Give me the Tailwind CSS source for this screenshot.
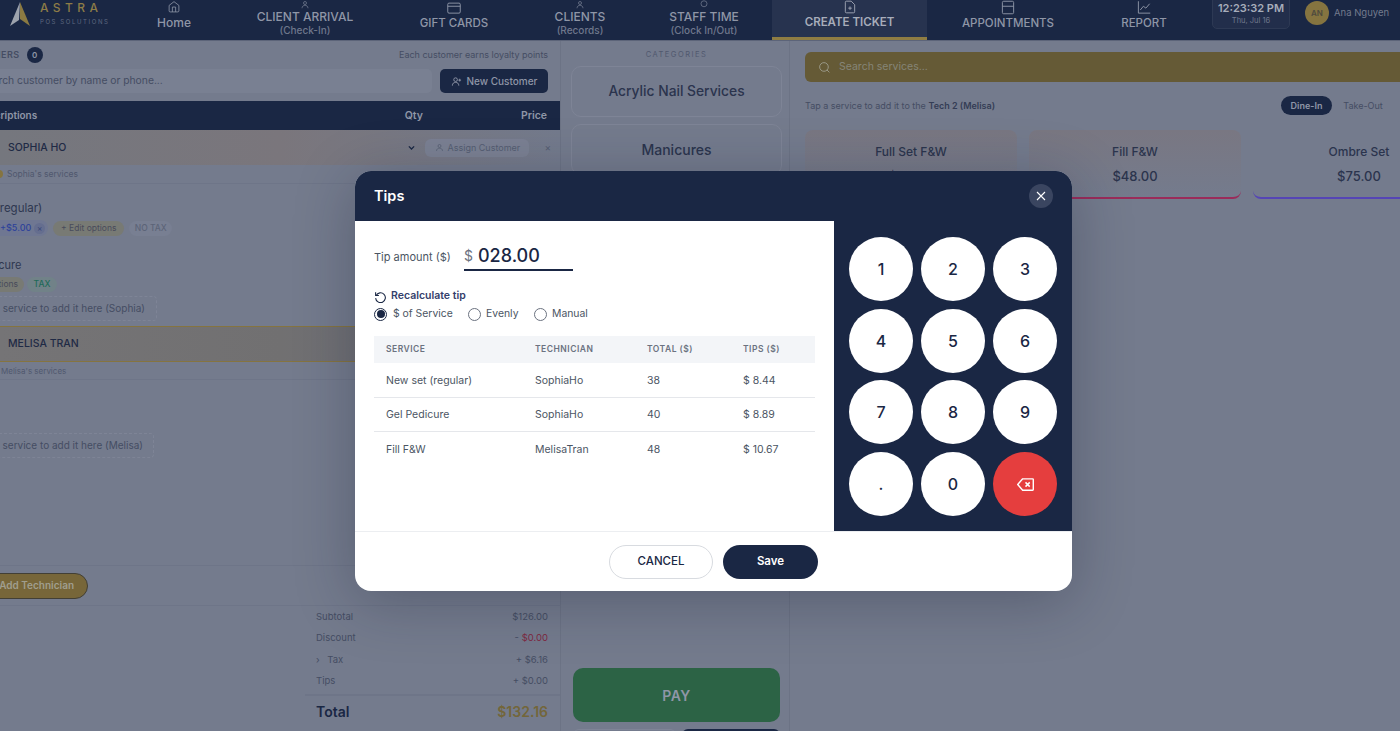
<!DOCTYPE html>
<html lang="en">
<head>
    <meta charset="UTF-8">
    <meta name="viewport" content="width=device-width, initial-scale=1.0">
    <title>Astra POS - Tips</title>
    <script src="https://cdn.jsdelivr.net/npm/@tailwindcss/browser@4"></script>
</head>
<body class="bg-[#747b8d] font-['Inter',sans-serif] text-[#1a2744] overflow-hidden">
<div class="relative w-[1400px] h-[731px] overflow-hidden flex flex-col">

    <!-- Top nav -->
    <header class="h-[41px] shrink-0 bg-[#1a2744] flex items-end overflow-hidden text-[#8f96a7] border-b border-[#5c6479]">
        <div class="w-[122px] h-[40px] shrink-0 flex items-start pl-[10px]">
            <svg width="20" height="26" viewBox="0 0 20 26" class="shrink-0 mt-[2px]">
                <polygon points="10,0 0,24 9,18" fill="#9da3ad"/>
                <polygon points="10,0 20,24 10,17" fill="#8b7a42"/>
            </svg>
            <div class="ml-[10px] mt-[1px]">
                <div class="text-[12px] leading-[14px] tracking-[4.4px] font-medium text-[#8d7c47]">ASTRA</div>
                <div class="text-[6px] leading-[9px] mt-[2px] tracking-[1.6px] text-[#5f6880]">POS SOLUTIONS</div>
            </div>
        </div>
        <nav class="flex items-end h-full">
            <div class="w-[104px] h-[40px] flex flex-col items-center justify-end pb-[10px] shrink-0">
                <svg width="18" height="18" viewBox="0 0 24 24" fill="none" stroke="#8f96a7" stroke-width="1.5"><path d="M3 10l9-7 9 7v10a2 2 0 0 1-2 2H5a2 2 0 0 1-2-2z"/><path d="M9 22v-9h6v9"/></svg>
                <span class="text-[12px] leading-[15px] mt-[2px] font-medium">Home</span>
            </div>
            <div class="w-[158px] h-[40px] flex flex-col items-center justify-end pb-[3px] shrink-0">
                <svg width="18" height="18" viewBox="0 0 24 24" fill="none" stroke="#8f96a7" stroke-width="1.5"><circle cx="12" cy="8" r="4"/><path d="M4 22c0-5 4-8 8-8s8 3 8 8"/></svg>
                <span class="text-[12px] leading-[15px] font-medium">CLIENT ARRIVAL</span>
                <span class="text-[10px] leading-[13px] text-[#6f778c] font-medium">(Check-In)</span>
            </div>
            <div class="w-[140px] h-[40px] flex flex-col items-center justify-end pb-[9px] shrink-0">
                <svg width="18" height="18" viewBox="0 0 24 24" fill="none" stroke="#8f96a7" stroke-width="1.5"><rect x="2" y="5" width="20" height="16" rx="2"/><path d="M2 10h20"/></svg>
                <span class="text-[11.5px] leading-[15px] mt-[1px] font-medium">GIFT CARDS</span>
            </div>
            <div class="w-[112px] h-[40px] flex flex-col items-center justify-end pb-[3px] shrink-0">
                <svg width="18" height="18" viewBox="0 0 24 24" fill="none" stroke="#8f96a7" stroke-width="1.5"><circle cx="12" cy="8" r="4"/><path d="M4 22c0-5 4-8 8-8s8 3 8 8"/></svg>
                <span class="text-[12px] leading-[15px] font-medium">CLIENTS</span>
                <span class="text-[10px] leading-[13px] text-[#6f778c] font-medium">(Records)</span>
            </div>
            <div class="w-[136px] h-[40px] flex flex-col items-center justify-end pb-[3px] shrink-0">
                <svg width="18" height="18" viewBox="0 0 24 24" fill="none" stroke="#8f96a7" stroke-width="1.5"><circle cx="12" cy="10" r="8"/></svg>
                <span class="text-[12px] leading-[15px] font-medium">STAFF TIME</span>
                <span class="text-[10px] leading-[13px] text-[#6f778c] font-medium">(Clock In/Out)</span>
            </div>
            <div class="w-[155px] h-[40px] flex flex-col items-center justify-end pb-[7px] shrink-0 bg-[#27334f] border-b-[3px] border-[#8f7d43] text-[#a7adba]">
                <svg width="18" height="18" viewBox="0 0 24 24" fill="none" stroke="#a7adba" stroke-width="1.5"><path d="M14 2H6a2 2 0 0 0-2 2v16a2 2 0 0 0 2 2h12a2 2 0 0 0 2-2V8z"/><path d="M12 11v6M9 14h6"/></svg>
                <span class="text-[11.5px] leading-[15px] mt-[1px] font-semibold">CREATE TICKET</span>
            </div>
            <div class="w-[162px] h-[40px] flex flex-col items-center justify-end pb-[9px] shrink-0">
                <svg width="18" height="18" viewBox="0 0 24 24" fill="none" stroke="#8f96a7" stroke-width="1.5"><rect x="3" y="2" width="18" height="20" rx="2"/><path d="M3 10h18"/></svg>
                <span class="text-[11.5px] leading-[15px] mt-[1px] font-medium">APPOINTMENTS</span>
            </div>
            <div class="w-[110px] h-[40px] flex flex-col items-center justify-end pb-[9px] shrink-0">
                <svg width="18" height="18" viewBox="0 0 24 24" fill="none" stroke="#8f96a7" stroke-width="1.5"><path d="M3 2v19h19"/><path d="M6 16l5-6 4 3 6-7"/></svg>
                <span class="text-[11.5px] leading-[15px] mt-[1px] font-medium">REPORT</span>
            </div>
        </nav>
        <div class="ml-[13px] mb-[11px] w-[78px] h-[34px] shrink-0 bg-[#222e4b] border border-[#2d3954] rounded-[5px] flex flex-col items-center justify-end pb-[2px]">
            <span class="text-[11px] leading-[14px] font-semibold text-[#a7adba]">12:23:32 PM</span>
            <span class="text-[7.5px] leading-[11px] text-[#6f778c]">Thu, Jul 16</span>
        </div>
        <div class="ml-[15px] mb-[15px] w-[24px] h-[24px] shrink-0 rounded-full bg-[#857440] text-[8px] font-semibold text-[#4d4a3e] flex items-center justify-center">AN</div>
        <span class="ml-[5px] mb-[21px] text-[9.5px] leading-[12px] text-[#747b8d] whitespace-nowrap">Ana Nguyen</span>
    </header>

    <div class="flex flex-1 min-h-0">
        <!-- Ticket column -->
        <section class="w-[561px] shrink-0 overflow-hidden border-r border-[#6c7385] flex flex-col">
            <div class="h-[60px] shrink-0 pr-[12px] pt-[5px]">
                <div class="flex items-center justify-between h-[18px]">
                    <div class="flex items-center -ml-[42px]">
                        <span class="text-[9px] font-semibold tracking-[0.5px] text-[#454d63]">CUSTOMERS</span>
                        <span class="ml-[7px] w-[16px] h-[16px] rounded-full bg-[#1a2744] text-[#8f96a7] text-[8px] font-semibold flex items-center justify-center">0</span>
                    </div>
                    <span class="text-[9px] text-[#454d63]">Each customer earns loyalty points</span>
                </div>
                <div class="flex items-center gap-[8px] mt-[5px]">
                    <div class="flex-1 h-[24px] bg-[#798092] rounded-[5px] -ml-[20px] flex items-center text-[10.3px] text-[#454d63] overflow-hidden whitespace-nowrap">Search customer by name or phone...</div>
                    <div class="w-[108px] h-[24px] rounded-[5px] bg-[#1a2744] text-[#8f96a7] flex items-center justify-center gap-[5px] text-[10px] font-medium">
                        <svg width="11" height="11" viewBox="0 0 24 24" fill="none" stroke="#8f96a7" stroke-width="2"><circle cx="10" cy="8" r="4"/><path d="M3 21c0-5 3-7 7-7s7 2 7 7"/><path d="M19 6v6M16 9h6"/></svg>
                        New Customer
                    </div>
                </div>
            </div>
            <div class="h-[29px] shrink-0 bg-[#1a2744] text-[#8f96a7] text-[10px] font-semibold flex items-center pr-[13px]">
                <span class="-ml-[24px]">Descriptions</span>
                <span class="ml-auto mr-[98px] text-[10.5px]">Qty</span>
                <span class="text-[10.5px]">Price</span>
            </div>
            <div class="h-[35px] shrink-0 flex items-center pl-[8px] bg-gradient-to-r from-[#75777e] via-[#7a767c] to-[#747b8d]">
                <span class="text-[10.5px] font-medium text-[#1f2a45]">SOPHIA HO</span>
                <svg width="9" height="9" viewBox="0 0 24 24" fill="none" stroke="#1a2744" stroke-width="3.5" class="ml-auto"><path d="M5 9l7 7 7-7"/></svg>
                <div class="ml-[9px] w-[104px] h-[18px] rounded-[6px] bg-[#7b8193] text-[#555d72] text-[9px] flex items-center justify-center gap-[4px]">
                    <svg width="9" height="9" viewBox="0 0 24 24" fill="none" stroke="#555d72" stroke-width="2"><circle cx="12" cy="8" r="4"/><path d="M4 21c0-5 4-7 8-7s8 2 8 7"/></svg>
                    Assign Customer
                </div>
                <span class="ml-[15px] mr-[9px] text-[#555d72] text-[10px]">×</span>
            </div>
            <div class="h-[19px] shrink-0 flex items-center border-b border-[#6e7588] text-[8.5px] text-[#50586e]">
                <span class="w-[8px] h-[8px] rounded-full bg-[#857440] -ml-[5px] mr-[4px]"></span>Sophia's services
            </div>
            <div class="h-[142px] shrink-0 relative">
                <div class="mt-[17px] -ml-[52px] text-[11.5px] leading-[15px] text-[#2e3750] whitespace-nowrap">New set (regular)</div>
                <div class="mt-[3px] flex items-center h-[18px] text-[8.5px]">
                    <span class="h-[16px] flex items-center rounded-r-full bg-[#6f7792] pr-[3px] text-[#2d429a] font-medium text-[9px]">+$5.00<span class="ml-[3px] w-[11px] h-[11px] rounded-full bg-[#656e8f] text-[#3d4a7a] text-[8px] flex items-center justify-center">×</span></span>
                    <span class="ml-[5px] h-[15px] w-[71px] justify-center rounded-full bg-[#787a74] text-[#484b5b] flex items-center">+ Edit options</span>
                    <span class="ml-[5px] h-[15px] w-[43px] justify-center rounded-full bg-[#787f92] text-[#5c6478] font-medium flex items-center">NO TAX</span>
                </div>
                <div class="mt-[21px] -ml-[45px] text-[11px] leading-[14px] text-[#2e3750] whitespace-nowrap">Gel Pedicure</div>
                <div class="mt-[5px] flex items-center h-[15px] text-[8.5px]">
                    <span class="-ml-[49px] w-[73px] h-[15px] pr-[6px] rounded-full bg-[#787a74] text-[#484b5b] flex items-center justify-end whitespace-nowrap">+ Edit options</span>
                    <span class="ml-[3px] h-[15px] w-[30px] justify-center rounded-full bg-[#718288] text-[#1f6a58] font-medium flex items-center">TAX</span>
                </div>
                <div class="mt-[4px] -ml-[40px] w-[197px] h-[25px] border border-dashed border-[#7e8496] rounded-[4px] flex items-center justify-end pr-[11px] text-[10px] text-[#454d63] whitespace-nowrap">Tap a service to add it here (Sophia)</div>
            </div>
            <div class="h-[36px] shrink-0 flex items-center pl-[8px] border-y-[1.5px] border-[#857440] bg-gradient-to-r from-[#757476] via-[#717071] to-[#6c7082]">
                <span class="text-[10.5px] font-medium text-[#1f2a45]">MELISA TRAN</span>
            </div>
            <div class="h-[18px] shrink-0 flex items-center border-b border-[#6e7588] text-[8px] text-[#50586e] pl-[1px]">Melisa's services</div>
            <div class="h-[186px] shrink-0 border-b border-[#6e7588]">
                <div class="mt-[53px] -ml-[40px] w-[194px] h-[25px] border border-dashed border-[#7e8496] rounded-[4px] flex items-center justify-end pr-[10px] text-[10px] text-[#454d63] whitespace-nowrap">Tap a service to add it here (Melisa)</div>
            </div>
            <div class="h-[40px] shrink-0 flex items-center border-b border-[#6e7588]">
                <span class="-ml-[20px] w-[108px] h-[26px] rounded-full bg-[#776639] border border-[#423f35] flex items-center justify-end pr-[13px] text-[10px] font-semibold text-[#a09e8e] whitespace-nowrap">+ Add Technician</span>
            </div>
            <div class="ml-[305px] flex-1 pl-[11px] pr-[12px] pt-[1px] text-[9.5px] text-[#454d63]">
                <div class="h-[21px] flex items-center justify-between"><span>Subtotal</span><span>$126.00</span></div>
                <div class="h-[21px] flex items-center justify-between"><span>Discount</span><span class="text-[#7f2942]"><span class="text-[#454d63]">- </span>$0.00</span></div>
                <div class="h-[22px] flex items-center justify-between"><span><span class="mr-[5px]">›</span> Tax</span><span>+ $6.16</span></div>
                <div class="h-[21px] flex items-center justify-between"><span>Tips</span><span>+ $0.00</span></div>
                <div class="-ml-[11px] -mr-[12px] pl-[11px] pr-[12px] h-[33px] mt-[2px] border-t-2 border-[#6e7588] flex items-center justify-between">
                    <span class="text-[14px] font-semibold text-[#1a2744]">Total</span>
                    <span class="text-[14px] font-semibold text-[#73663a]">$132.16</span>
                </div>
            </div>
        </section>

        <!-- Categories column -->
        <section class="w-[229px] shrink-0 pl-[10px] pr-[7px] border-r border-[#6c7385] flex flex-col overflow-hidden">
            <div class="h-[25px] pt-[9px] shrink-0 text-center text-[7.5px] leading-[9px] tracking-[1.5px] text-[#50586e]">CATEGORIES</div>
            <div class="h-[51px] shrink-0 border border-[#7e8496] rounded-[10px] flex items-center justify-center text-[13.8px] font-medium text-[#2b344d]">Acrylic Nail Services</div>
            <div class="h-[51px] shrink-0 mt-[7px] border border-[#7e8496] rounded-[10px] flex items-center justify-center text-[14px] font-medium text-[#2b344d]">Manicures</div>
            <div class="mt-[493px] ml-[2px] w-[207px] h-[54px] shrink-0 rounded-[10px] bg-[#2c6345] flex items-center justify-center text-[14px] font-semibold tracking-[0.5px] text-[#8f96a7]">PAY</div>
            <div class="mt-[7px] ml-[2px] w-[207px] h-[30px] shrink-0 flex gap-[6px]">
                <div class="w-[103px] border border-[#7e8496] rounded-[6px]"></div>
                <div class="flex-1 bg-[#1a2744] rounded-[6px]"></div>
            </div>
        </section>

        <!-- Services column -->
        <section class="flex-1 pl-[15px] flex flex-col min-w-0 overflow-hidden">
            <div class="mt-[11px] h-[30px] w-[600px] shrink-0 rounded-l-[6px] bg-[#655a36] flex items-center pl-[13px] text-[10.5px] text-[#858577]">
                <svg width="13" height="13" viewBox="0 0 24 24" fill="none" stroke="#999887" stroke-width="1.8"><circle cx="11" cy="11" r="8"/><path d="M21 21l-4.5-4.5"/></svg>
                <span class="ml-[8px]">Search services...</span>
            </div>
            <div class="mt-[14px] h-[19px] flex items-center text-[9px] text-[#454d63] shrink-0">
                <span>Tap a service to add it to the <span class="font-semibold text-[#343d55]">Tech 2 (Melisa)</span></span>
                <span class="ml-auto w-[51px] h-[19px] rounded-full bg-[#1a2744] text-[#8f96a7] font-semibold flex items-center justify-center">Dine-In</span>
                <span class="ml-[11px] mr-[17px] w-[40px] text-center whitespace-nowrap">Take-Out</span>
            </div>
            <div class="mt-[15px] flex gap-[12px] shrink-0">
                <div class="w-[212px] h-[69px] shrink-0 text-center pt-[14px] rounded-[8px] bg-gradient-to-b from-[#797782] to-[#747b8d]">
                    <div class="text-[12px] leading-[16px] text-[#2b344d] font-medium">Full Set F&amp;W</div>
                    <div class="text-[13px] leading-[16px] mt-[8px] font-medium text-[#2b344d]">$38.00</div>
                </div>
                <div class="w-[212px] h-[69px] shrink-0 text-center pt-[14px] border-b-2 border-[#9a2c5a] rounded-[8px] bg-gradient-to-b from-[#797782] to-[#747b8d]">
                    <div class="text-[12px] leading-[16px] text-[#2b344d] font-medium">Fill F&amp;W</div>
                    <div class="text-[13px] leading-[16px] mt-[8px] font-medium text-[#2b344d]">$48.00</div>
                </div>
                <div class="w-[212px] h-[69px] shrink-0 text-center pt-[14px] border-b-2 border-[#5545b5] rounded-[8px]">
                    <div class="text-[12px] leading-[16px] text-[#2b344d] font-medium">Ombre Set</div>
                    <div class="text-[13px] leading-[16px] mt-[8px] font-medium text-[#2b344d]">$75.00</div>
                </div>
            </div>
        </section>
    </div>

    <!-- Tips modal -->
    <div class="absolute left-[355px] top-[171px] w-[717px] h-[420px] rounded-[16px] overflow-hidden bg-white shadow-[0_10px_60px_rgba(20,25,45,0.3)] flex flex-col">
        <div class="flex h-[360px] shrink-0">
            <div class="w-[479px] shrink-0 flex flex-col">
                <div class="h-[50px] shrink-0 bg-[#1a2744] flex items-center pl-[19px] text-[14.5px] font-semibold text-white">Tips</div>
                <div class="pl-[19px] pr-[19px]">
                    <div class="flex items-center h-[50px] mt-[12px]">
                        <span class="w-[90px] -mt-[2px] text-[11px] text-[#4b5563] whitespace-nowrap">Tip amount ($)</span>
                        <div class="w-[109px] h-[28px] border-b-2 border-[#1a2744] flex items-center -mt-[3px]">
                            <span class="text-[14px] text-[#6b7280]">$</span>
                            <span class="ml-[5px] text-[18px] font-medium text-[#1a2744]">028.00</span>
                        </div>
                    </div>
                    <div class="flex items-center h-[14px] mt-[6px]">
                        <svg width="13" height="13" viewBox="0 0 24 24" fill="none" stroke="#1a2744" stroke-width="2"><path d="M3 4v6h6"/><path d="M4 10a9 9 0 1 1-1 5"/></svg>
                        <span class="ml-[4px] text-[10.5px] font-semibold text-[#34406b]">Recalculate tip</span>
                    </div>
                    <div class="flex items-center h-[18px] mt-[2px] text-[10.4px] text-[#4b5563]">
                        <span class="w-[13px] h-[13px] rounded-full border border-[#1a2744] flex items-center justify-center"><span class="w-[8px] h-[8px] rounded-full bg-[#1a2744]"></span></span>
                        <span class="ml-[6px] w-[59px] whitespace-nowrap">$ of Service</span>
                        <span class="ml-[16px] w-[13px] h-[13px] rounded-full border border-[#6b7280]"></span>
                        <span class="ml-[5px] w-[32px]">Evenly</span>
                        <span class="ml-[16px] w-[13px] h-[13px] rounded-full border border-[#6b7280]"></span>
                        <span class="ml-[5px]">Manual</span>
                    </div>
                    <table class="mt-[13px] w-[441px] table-fixed text-left">
                        <thead>
                            <tr class="h-[27px] bg-[#f3f5f8] text-[8.5px] font-semibold tracking-[0.5px] text-[#6b7280]">
                                <th class="w-[161px] pl-[12px] font-semibold">SERVICE</th>
                                <th class="w-[112px] font-semibold">TECHNICIAN</th>
                                <th class="w-[96px] font-semibold">TOTAL ($)</th>
                                <th class="font-semibold">TIPS ($)</th>
                            </tr>
                        </thead>
                        <tbody class="text-[10.5px] text-[#4b5563] [&_td]:pt-[2px]">
                            <tr class="h-[34px] border-b border-[#e5e7eb]">
                                <td class="pl-[12px]">New set (regular)</td><td>SophiaHo</td><td>38</td><td>$ 8.44</td>
                            </tr>
                            <tr class="h-[34px] border-b border-[#e5e7eb]">
                                <td class="pl-[12px]">Gel Pedicure</td><td>SophiaHo</td><td>40</td><td>$ 8.89</td>
                            </tr>
                            <tr class="h-[36px]">
                                <td class="pl-[12px]">Fill F&amp;W</td><td>MelisaTran</td><td>48</td><td>$ 10.67</td>
                            </tr>
                        </tbody>
                    </table>
                </div>
            </div>
            <div class="flex-1 relative bg-[#1a2744] pt-[66px] pl-[15px]">
                <button class="absolute right-[19px] top-[13px] w-[24px] h-[24px] rounded-full bg-[#3a4560] flex items-center justify-center">
                    <svg width="12" height="12" viewBox="0 0 24 24" fill="none" stroke="white" stroke-width="2.2"><path d="M4 4l16 16M20 4L4 20"/></svg>
                </button>
                <div class="grid grid-cols-[64px_64px_64px] auto-rows-[64px] gap-x-[8px] gap-y-[7.7px] text-[16px] font-medium text-[#1a2744]">
                    <button class="rounded-full bg-white">1</button>
                    <button class="rounded-full bg-white">2</button>
                    <button class="rounded-full bg-white">3</button>
                    <button class="rounded-full bg-white">4</button>
                    <button class="rounded-full bg-white">5</button>
                    <button class="rounded-full bg-white">6</button>
                    <button class="rounded-full bg-white">7</button>
                    <button class="rounded-full bg-white">8</button>
                    <button class="rounded-full bg-white">9</button>
                    <button class="rounded-full bg-white">.</button>
                    <button class="rounded-full bg-white">0</button>
                    <button class="rounded-full bg-[#e53e3e] flex items-center justify-center">
                        <svg width="17" height="13" viewBox="0 0 24 18" fill="none" stroke="white" stroke-width="2" stroke-linejoin="round"><path d="M8 1h14a1 1 0 0 1 1 1v14a1 1 0 0 1-1 1H8l-7-8z"/><path d="M12 6l6 6M18 6l-6 6"/></svg>
                    </button>
                </div>
            </div>
        </div>
        <div class="flex-1 border-t border-[#eceef1] flex items-center justify-center gap-[10px]">
            <button class="w-[104px] h-[34px] rounded-full border border-[#d8dbe0] text-[11.5px] font-medium text-[#1a2744] pt-[1px]">CANCEL</button>
            <button class="w-[95px] h-[34px] rounded-full bg-[#1a2744] text-[11.5px] font-semibold text-white pt-[1px]">Save</button>
        </div>
    </div>
</div>
</body>
</html>
